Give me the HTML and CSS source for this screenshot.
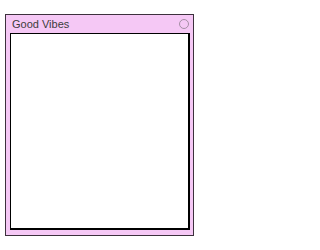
FILE: index.html
```html
<!DOCTYPE html>
<html>
<head>
<meta charset="utf-8">
<link rel="stylesheet" href="styles.css">
</head>
<body>
<div class="window">
  <div class="titlebar">
    <span class="title">Good Vibes</span>
    <span class="close"></span>
  </div>
  <div class="content"></div>
</div>
</body>
</html>
```
FILE: styles.css
```css
html, body {
  margin: 0;
  padding: 0;
  background: #ffffff;
}
.window {
  box-sizing: border-box;
  margin: 14px 0 0 5px;
  width: 189px;
  height: 222px;
  border: 1px solid #3d313d;
  background: #f5c8f5;
  padding: 0 3px 5px 4px;
  display: flex;
  flex-direction: column;
}
.titlebar {
  height: 18px;
  flex: none;
  display: flex;
  align-items: center;
  justify-content: space-between;
  padding: 0 1px 0 2px;
}
.title {
  font-family: "Liberation Sans", Arial, sans-serif;
  font-size: 11px;
  color: #3c3c3c;
}
.close {
  width: 8px;
  height: 8px;
  border: 1px solid #a58fa5;
  border-radius: 50%;
}
.content {
  flex: 1;
  background: #ffffff;
  border: 1px solid #000000;
  border-width: 1px 2px 2px 1px;
}
```
